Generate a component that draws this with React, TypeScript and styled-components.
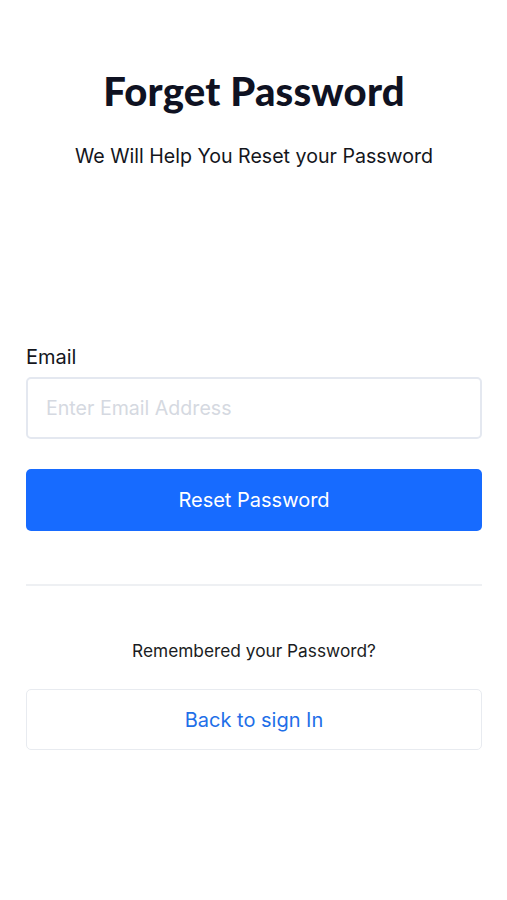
import React from 'react';
import styled, { createGlobalStyle } from 'styled-components';

const GlobalStyle = createGlobalStyle`
  body {
    margin: 0;
    background: #ffffff;
    font-family: Inter, 'Liberation Sans', sans-serif;
  }
`;

const Page = styled.div`
  display: flex;
  flex-direction: column;
  box-sizing: border-box;
  width: 100%;
  padding: 0 25px 0 26px;
`;

const Header = styled.header`
  display: flex;
  flex-direction: column;
  align-items: center;
`;

const Title = styled.h1`
  margin: 66px 0 0;
  font-family: Lato, 'Noto Sans', sans-serif;
  font-weight: 900;
  font-size: 40px;
  line-height: 50px;
  letter-spacing: 0.2px;
  color: #0f1222;
`;

const Subtitle = styled.p`
  margin: 28px 0 0;
  font-size: 19.6px;
  line-height: 24px;
  color: #14161c;
`;

const Form = styled.form`
  display: flex;
  flex-direction: column;
  margin-top: 177px;
`;

const Label = styled.label`
  font-size: 20px;
  line-height: 24px;
  color: #14161c;
`;

const Input = styled.input`
  box-sizing: border-box;
  margin-top: 8px;
  width: 100%;
  height: 62px;
  padding: 0 18px;
  border: 2px solid #e4e8f0;
  border-radius: 5px;
  font-family: inherit;
  font-size: 19.6px;
  color: #14161c;
  outline: none;

  &::placeholder {
    color: #d5d9e1;
  }
`;

interface ButtonProps {
  $variant: 'primary' | 'outline';
}

const Button = styled.button<ButtonProps>`
  box-sizing: border-box;
  width: 100%;
  height: 62px;
  border-radius: 5px;
  font-family: inherit;
  font-size: 20px;
  cursor: pointer;
  border: ${(p) => (p.$variant === 'primary' ? 'none' : '1.5px solid #e8ebf0')};
  background: ${(p) => (p.$variant === 'primary' ? '#176bff' : '#ffffff')};
  color: ${(p) => (p.$variant === 'primary' ? '#ffffff' : '#1f6fe8')};
`;

const SubmitButton = styled(Button)`
  margin-top: 30px;
`;

const Divider = styled.hr`
  margin: 53px 0 0;
  border: none;
  border-top: 2px solid #eef0f3;
`;

const Footer = styled.div`
  display: flex;
  flex-direction: column;
  align-items: center;
`;

const Prompt = styled.p`
  margin: 54px 0 0;
  font-size: 17.3px;
  line-height: 22px;
  color: #1a1c22;
`;

const BackButton = styled(Button)`
  margin-top: 27px;
  height: 61px;
`;

const App = () => {
  return (
    <>
      <GlobalStyle />
      <Page>
        <Header>
          <Title>Forget Password</Title>
          <Subtitle>We Will Help You Reset your Password</Subtitle>
        </Header>
        <Form onSubmit={(e) => e.preventDefault()}>
          <Label htmlFor="email">Email</Label>
          <Input id="email" type="email" placeholder="Enter Email Address" />
          <SubmitButton type="submit" $variant="primary">
            Reset Password
          </SubmitButton>
        </Form>
        <Divider />
        <Footer>
          <Prompt>Remembered your Password?</Prompt>
          <BackButton type="button" $variant="outline">
            Back to sign In
          </BackButton>
        </Footer>
      </Page>
    </>
  );
};

export default App;
